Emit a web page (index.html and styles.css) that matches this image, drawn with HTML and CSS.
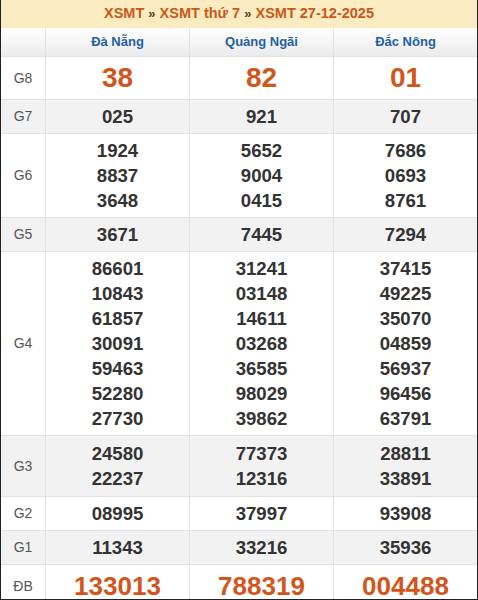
FILE: index.html
```html
<!DOCTYPE html>
<html lang="vi">
<head>
<meta charset="utf-8">
<title>XSMT 27-12-2025</title>
<link rel="stylesheet" href="styles.css">
</head>
<body>
<div class="frame">
  <div class="title">
    <a class="crumb">XSMT</a> <span class="sep">»</span> <a class="crumb">XSMT thứ 7</a> <span class="sep">»</span> <a class="crumb">XSMT 27-12-2025</a>
  </div>
  <table class="kq">
    <colgroup>
      <col class="c-lbl"><col class="c-prov"><col class="c-prov"><col>
    </colgroup>
    <thead>
      <tr><th></th><th>Đà Nẵng</th><th>Quảng Ngãi</th><th>Đắc Nông</th></tr>
    </thead>
    <tbody>
      <tr class="big">
        <td class="lbl">G8</td><td>38</td><td>82</td><td>01</td>
      </tr>
      <tr class="alt">
        <td class="lbl">G7</td><td>025</td><td>921</td><td>707</td>
      </tr>
      <tr>
        <td class="lbl">G6</td>
        <td><div>1924</div><div>8837</div><div>3648</div></td>
        <td><div>5652</div><div>9004</div><div>0415</div></td>
        <td><div>7686</div><div>0693</div><div>8761</div></td>
      </tr>
      <tr class="alt">
        <td class="lbl">G5</td><td>3671</td><td>7445</td><td>7294</td>
      </tr>
      <tr>
        <td class="lbl">G4</td>
        <td><div>86601</div><div>10843</div><div>61857</div><div>30091</div><div>59463</div><div>52280</div><div>27730</div></td>
        <td><div>31241</div><div>03148</div><div>14611</div><div>03268</div><div>36585</div><div>98029</div><div>39862</div></td>
        <td><div>37415</div><div>49225</div><div>35070</div><div>04859</div><div>56937</div><div>96456</div><div>63791</div></td>
      </tr>
      <tr class="alt g3">
        <td class="lbl">G3</td>
        <td><div>24580</div><div>22237</div></td>
        <td><div>77373</div><div>12316</div></td>
        <td><div>28811</div><div>33891</div></td>
      </tr>
      <tr>
        <td class="lbl">G2</td><td>08995</td><td>37997</td><td>93908</td>
      </tr>
      <tr class="alt">
        <td class="lbl">G1</td><td>11343</td><td>33216</td><td>35936</td>
      </tr>
      <tr class="db">
        <td class="lbl">ĐB</td><td>133013</td><td>788319</td><td>004488</td>
      </tr>
    </tbody>
  </table>
</div>
</body>
</html>
```
FILE: styles.css
```css
html, body {
  margin: 0;
  padding: 0;
  background: #fff;
}
body {
  font-family: "Liberation Sans", Arial, sans-serif;
}
.frame {
  width: 478px;
  height: 600px;
  box-sizing: border-box;
  border-left: 1px solid #222;
  border-right: 1px solid #222;
  border-bottom: 1px solid #222;
  overflow: hidden;
}
.title {
  height: 28px;
  line-height: 27px;
  background: #faebc0;
  text-align: center;
  font-weight: bold;
  font-size: 14.5px;
  color: #c9581a;
}
.crumb {
  color: #c9581a;
}
.sep {
  color: #5a3a20;
  font-size: 13px;
}
.kq {
  width: 100%;
  border-collapse: separate;
  border-spacing: 0;
  table-layout: fixed;
}
.c-lbl { width: 45px; }
.c-prov { width: 144px; }
.kq th, .kq td {
  border-right: 1px solid #e2e2e2;
  border-bottom: 1px solid #e2e2e2;
  text-align: center;
  padding: 4px 0;
}
.kq th:last-child, .kq td:last-child {
  border-right: none;
}
.kq th {
  background: linear-gradient(#ffffff, #ebebeb);
  color: #1f5fa6;
  font-size: 13px;
  font-weight: bold;
  line-height: 20px;
  height: 20px;
}
.kq td {
  color: #333;
  font-weight: bold;
  font-size: 18.6px;
  line-height: 25px;
}
.kq tr.g3 td {
  padding: 5px 0;
}
.kq td.lbl {
  font-weight: normal;
  font-size: 14px;
  color: #555;
}
.kq tr.alt td {
  background: #f2f2f2;
}
.kq tr.big td:not(.lbl) {
  font-size: 28px;
  line-height: 34px;
  color: #d2561b;
}
.kq tr.db td:not(.lbl) {
  font-size: 26px;
  line-height: 34px;
  color: #d2561b;
}
```
